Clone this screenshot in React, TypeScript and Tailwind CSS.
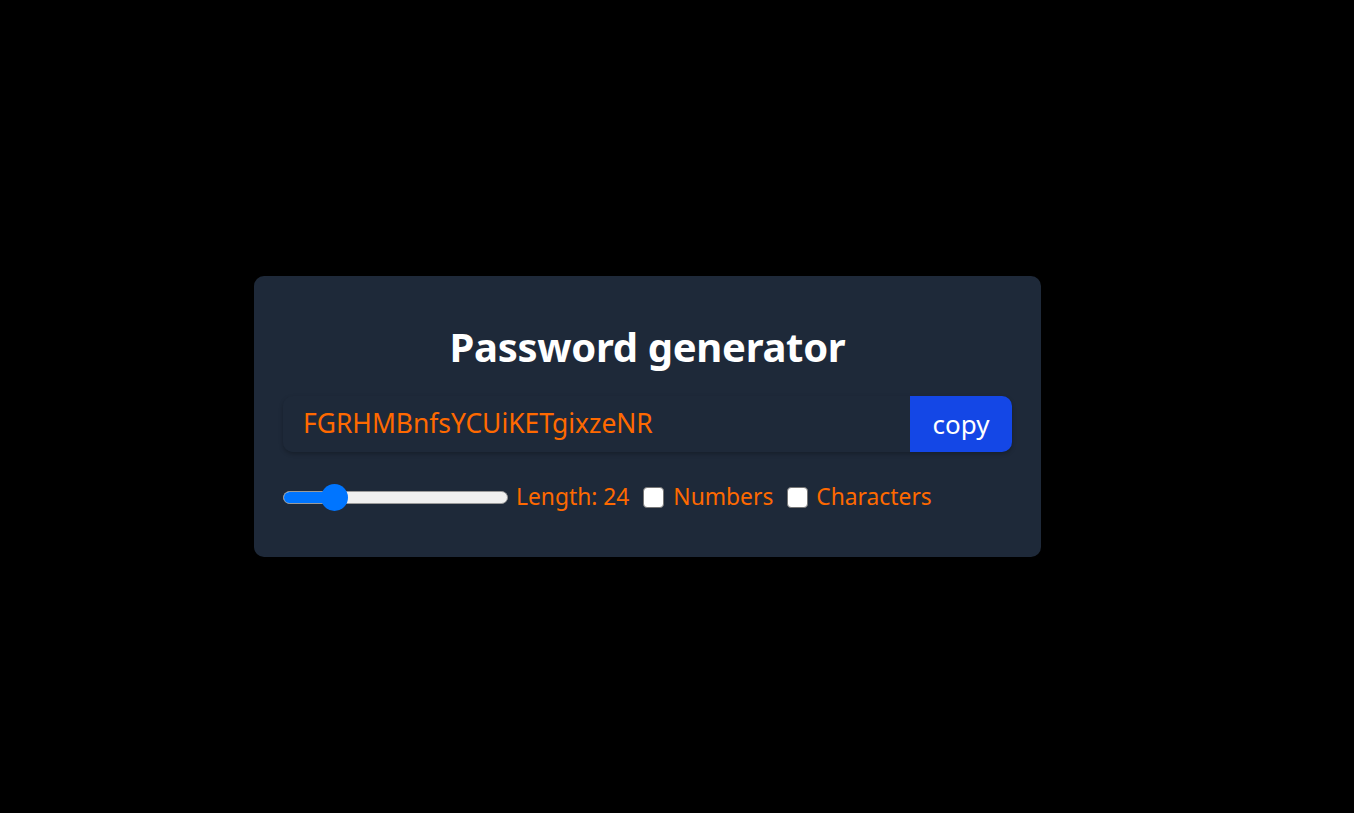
import React from "react";

export default function App() {
  const font = { fontFamily: '"Noto Sans", "Open Sans", sans-serif' };
  return (
    <div className="min-h-[813px] w-full bg-black pt-[276px] pl-[254px]" style={font}>
      <div className="w-[787px] h-[281px] rounded-[10px] bg-[#1e2939] px-[29px] pt-[47px] text-[#ff6900]">
        <h1 className="text-center text-white font-bold text-[40px] leading-[48px] tracking-[-0.3px]">
          Password generator
        </h1>
        <div className="mt-[25px] flex h-[56px] rounded-[10px] overflow-hidden shadow-[0_2px_4px_rgba(0,0,0,0.25)]">
          <input
            readOnly
            value="FGRHMBnfsYCUiKETgixzeNR"
            className="flex-1 bg-[#1e2939] px-[20px] text-[26.4px] text-[#ff6900] outline-none"
            style={font}
          />
          <button className="w-[102px] bg-[#1447e6] text-white text-[26px]" style={font}>
            copy
          </button>
        </div>
        <div className="mt-[31px] flex items-center h-[28px] text-[22.8px]">
          <div className="relative w-[225px] h-[28px] flex items-center">
            <div className="w-full h-[13px] rounded-full bg-[#efefef] border border-[#9a9a9a] overflow-hidden">
              <div className="h-full w-[52px] bg-[#0075ff]" />
            </div>
            <div className="absolute left-[38px] top-[0.5px] w-[27px] h-[27px] rounded-full bg-[#0075ff]" />
          </div>
          <span className="ml-[8px] leading-none">Length: 24</span>
          <input
            type="checkbox"
            className="ml-[14px] appearance-none w-[21px] h-[21px] bg-white border-[1.5px] border-[#767676] rounded-[4px]"
          />
          <span className="ml-[9px] leading-none">Numbers</span>
          <input
            type="checkbox"
            className="ml-[14px] appearance-none w-[21px] h-[21px] bg-white border-[1.5px] border-[#767676] rounded-[4px]"
          />
          <span className="ml-[8px] leading-none">Characters</span>
        </div>
      </div>
    </div>
  );
}
